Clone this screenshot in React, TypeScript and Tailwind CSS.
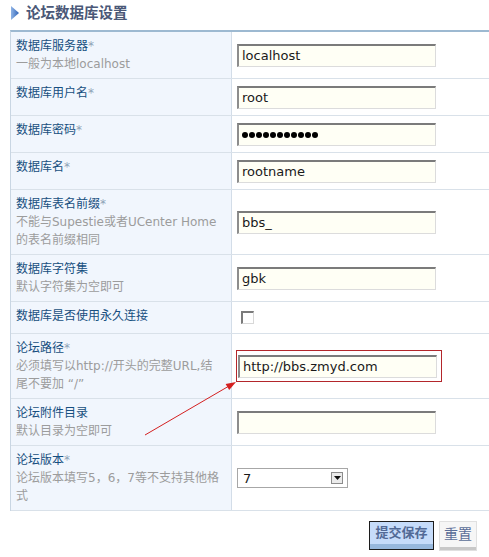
import React from 'react';

const FONT = "font-['DejaVu_Sans','Noto_Sans_CJK_SC',sans-serif]";

type RowProps = {
  label: string;
  req?: boolean;
  hint?: string[];
  children: React.ReactNode;
  cellClass?: string;
};

function Row({ label, req, hint, children, cellClass }: RowProps) {
  return (
    <div className="grid grid-cols-[221px_1fr] border-b border-[#d9e1e9]">
      <div className="bg-[#f1f6fd] border-r border-[#d3dde8] pl-[5px] py-[5px] text-[12px] leading-[18px]">
        <div className="text-[#174f80] whitespace-nowrap">
          {label}
          {req && <span className="text-[#8ea2b7]">*</span>}
        </div>
        {hint?.map((h) => (
          <div key={h} className="text-[#9c9c9c] whitespace-nowrap">
            {h}
          </div>
        ))}
      </div>
      <div className={cellClass ?? 'flex items-center pl-[5px] py-[6.5px]'}>{children}</div>
    </div>
  );
}

const BOX =
  'w-[199px] h-[23px] bg-[#fffff5] border-t-2 border-l-2 border-r border-b border-t-[#7b7b7b] border-l-[#8d8d8d] border-r-[#dcdcdc] border-b-[#dcdcdc]';

function TextBox({ value }: { value: string }) {
  return (
    <input
      readOnly
      type="text"
      value={value}
      className={`${FONT} ${BOX} pl-[3px] text-[13px] text-[#1a1a1a] outline-none`}
    />
  );
}

function PasswordBox({ count }: { count: number }) {
  return (
    <div className={`${BOX} flex items-center gap-[1px] pl-[3px]`}>
      {Array.from({ length: count }).map((_, i) => (
        <span key={i} className="w-[6px] h-[6px] rounded-full bg-black" />
      ))}
    </div>
  );
}

export default function App() {
  return (
    <div className={`relative w-[489px] h-[557px] bg-white overflow-hidden ${FONT}`}>
      {/* title */}
      <div className="flex items-start gap-[7px] pl-[11px] pt-[4px] h-[30px]">
        <svg width="8" height="14" viewBox="0 0 8 14" className="mt-[2px]">
          <defs>
            <linearGradient id="tri" x1="0" y1="0" x2="1" y2="0">
              <stop offset="0" stopColor="#8fb4e6" />
              <stop offset="1" stopColor="#2f63b8" />
            </linearGradient>
          </defs>
          <polygon points="0,0 8,7 0,14" fill="url(#tri)" />
        </svg>
        <span className="text-[14.5px] leading-[18px] font-bold text-[#4a5877]">论坛数据库设置</span>
      </div>

      {/* form table */}
      <div className="ml-[10px] border-l border-[#c9d6e3] border-t-2 border-t-[#9db9d1]">
        <Row label="数据库服务器" req hint={['一般为本地localhost']}>
          <TextBox value="localhost" />
        </Row>
        <Row label="数据库用户名" req>
          <TextBox value="root" />
        </Row>
        <Row label="数据库密码" req>
          <PasswordBox count={11} />
        </Row>
        <Row label="数据库名" req>
          <TextBox value="rootname" />
        </Row>
        <Row label="数据库表名前缀" req hint={['不能与Supestie或者UCenter Home', '的表名前缀相同']}>
          <TextBox value="bbs_" />
        </Row>
        <Row label="数据库字符集" hint={['默认字符集为空即可']}>
          <TextBox value="gbk" />
        </Row>
        <Row label="数据库是否使用永久连接" cellClass="flex items-center pl-[9px] py-[9px]">
          <div className="w-[13px] h-[13px] bg-white border-t-2 border-l-2 border-r border-b border-t-[#7b7b7b] border-l-[#7b7b7b] border-r-[#d8d8d8] border-b-[#d8d8d8]" />
        </Row>
        <Row label="论坛路径" req hint={['必须填写以http://开头的完整URL,结', '尾不要加  “/”']} cellClass="flex items-center pl-[6px] py-[7px]">
          <div className="relative">
            <TextBox value="http://bbs.zmyd.com" />
            <div className="absolute -left-[2px] -right-[5px] -top-[4px] -bottom-[4px] border border-[#b3262b] pointer-events-none" />
          </div>
        </Row>
        <Row label="论坛附件目录" hint={['默认目录为空即可']}>
          <TextBox value="" />
        </Row>
        <Row label="论坛版本" req hint={['论坛版本填写5，6，7等不支持其他格', '式']}>
          <div className="flex items-center justify-between w-[111px] h-[20px] border border-[#a7a7a7] bg-white pl-[5px] pr-[4px]">
            <span className="text-[13px] text-[#1a1a1a] leading-none">7</span>
            <div className="flex items-center justify-center w-[12px] h-[12px] border border-[#8c8c8c] bg-[#ebebeb]">
              <svg width="7" height="4" viewBox="0 0 7 4">
                <polygon points="0,0 7,0 3.5,4" fill="#111" />
              </svg>
            </div>
          </div>
        </Row>
      </div>

      {/* buttons */}
      <div className="flex justify-end gap-[5px] pr-[12px] mt-[10px]">
        <button className="flex flex-col w-[65px] h-[29px] border border-[#1c1c1c] bg-[#c6dcfa]">
          <span className="flex-1 flex items-center justify-center text-[13px] font-bold text-[#526a96]">提交保存</span>
          <span className="h-[5px] w-full bg-[#97b8dd]" />
        </button>
        <button className="flex flex-col w-[38px] h-[30px] border border-[#e0e0e0] bg-[#f6f6f6]">
          <span className="flex-1 flex items-center justify-center text-[14px] text-[#5a6e98]">重置</span>
          <span className="h-[3px] w-full bg-[#c8c8c8]" />
        </button>
      </div>

      {/* annotation arrow */}
      <svg className="absolute inset-0 pointer-events-none" width="489" height="557">
        <line x1="145" y1="435" x2="229" y2="386" stroke="#d42020" strokeWidth="1" />
        <polygon points="236,382 229.2,390 225.6,384" fill="#d42020" />
      </svg>
    </div>
  );
}
